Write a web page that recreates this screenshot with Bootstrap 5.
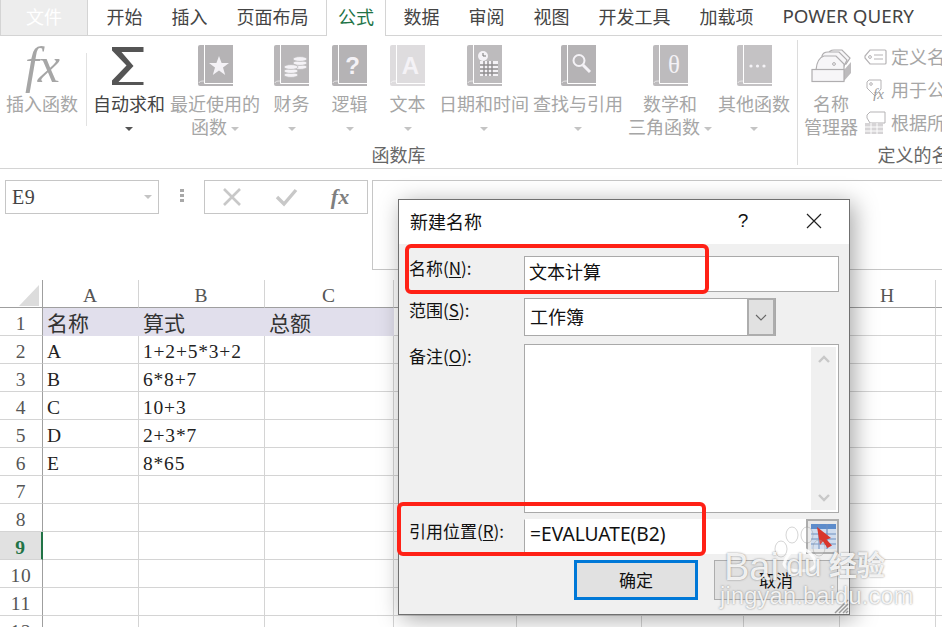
<!DOCTYPE html>
<html lang="zh-CN">
<head>
<meta charset="utf-8">
<title>新建名称</title>
<link href="https://cdn.jsdelivr.net/npm/bootstrap@5.3.0/dist/css/bootstrap.min.css" rel="stylesheet">
<style>
html,body{height:627px;overflow:hidden;background:#fff}
body{font-family:"Noto Sans CJK SC","Noto Sans",sans-serif;color:#444}
.page{position:relative;width:942px;height:627px;overflow:hidden}
/* tabs */
.tabbar{height:36px;border-bottom:1px solid #d4d4d4;font-size:18px;line-height:32px;white-space:nowrap}
.tab-file{width:88px;height:36px;background:#ededed;border:1px solid #d4d4d4;border-top:0;color:#fff;text-align:center;margin-right:4px}
.tab-item{padding:0 14.5px;color:#444}
.tab-on{margin:0 3px;padding:0 11px;height:36px;background:#fff;border:1px solid #d4d4d4;border-top:0;border-bottom:0;color:#217346}
.tab-pq{font-family:"Noto Sans",sans-serif;font-size:18.8px}
/* ribbon */
.ribbon{height:133px;border-bottom:1px solid #d4d4d4;overflow:hidden;width:942px}
.rgroup{position:relative;flex:none}
.rg-main{width:797px}
.rg-name{width:250px;border-left:1px solid #dcdcdc;margin-top:4px;height:125px}
.rg-label{position:absolute;left:0;right:0;top:106px;text-align:center;font-size:18px;line-height:24px;color:#666}
.rg-name .rg-label{top:102px}
.rbtn{flex:none;text-align:center;font-size:18px;line-height:23px;color:#a6a6a6;white-space:nowrap;padding-top:9px}
.rbtn svg{display:block;margin:0 auto}
.rbtn .rico{height:41px;margin-bottom:6px}
.rbtn .mgr-ico{height:37px;margin-bottom:6px}
.rbtn.dark{color:#444}
.w84{width:84px}.w74{width:74px}.w94{width:94px}.w59{width:59px}.w57{width:57px}.w90{width:90px}.w78{width:78px}
.nudge{margin-left:2px}
.rsep{flex:none;width:1px;height:73px;background:#e2e2e2;margin:17px 1px 0 2px}
.gap-after{margin-right:5px}
.car{display:inline-block;width:0;height:0;border:4px solid transparent;border-top:4px solid #c4c4c4;border-bottom:0;vertical-align:middle}
.dark .car{border-top-color:#555}
.fxbig{font-family:"Liberation Serif",serif;font-style:italic;font-size:50px;line-height:41px;color:#a6a6a6;letter-spacing:-1px}
.rlist{font-size:18px;line-height:33px;color:#a6a6a6;white-space:nowrap;margin-top:0}
.rlist svg{flex:none;margin-right:4px}
.mgr{width:66px}
/* formula bar */
.fbar{height:111px;padding-top:11px}
.namebox{margin-left:5px;width:154px;height:34px;border:1px solid #c6c6c6;padding:0 6px 0 6px;font-family:"Liberation Serif",serif;font-size:20px;letter-spacing:.5px;line-height:32px}
.fdots{width:45px;padding-top:9px}
.fdots i{display:block;width:4px;height:3px;background:#a8a8a8;margin:0 auto 2px}
.fbtns{width:164px;height:34px;border:1px solid #c6c6c6}
.fbtns>*{width:54px;text-align:center}
.fxsm{font-family:"Liberation Serif",serif;font-style:italic;font-weight:700;font-size:22px;line-height:30px;color:#7f7f7f}
.finput{margin-left:4px;flex:1;height:90px;border:1px solid #c6c6c6;border-right:0}
/* sheet */
.sheet{table-layout:fixed;border-collapse:separate;border-spacing:0;width:956px;margin:0;font-family:"Liberation Serif",serif;font-size:19.5px;letter-spacing:.8px;color:#222}
.sheet th,.sheet td{height:28px;padding:4px 0 0 0;border-right:1px solid #d4d4d4;border-bottom:1px solid #d4d4d4;line-height:23px;overflow:hidden;white-space:nowrap}
.sheet td{padding-left:4px}
.sheet th{font-weight:400;color:#555;text-align:center}
.sheet tr>th:first-child{border-right:1px solid #9f9f9f}
.sheet thead th{border-bottom:1px solid #9f9f9f;position:relative}
.c0{width:43px}.c1{width:96px}.c2{width:126px}.c3{width:129px}.c4{width:123px}.c5{width:125px}.c6{width:102px}.c7{width:96px}.c8{width:96px}.c9{width:20px}
.sheet td.filled{background:#e1dfec;border-color:#e1dfec;font-family:"Noto Sans CJK SC",sans-serif;font-size:21px;letter-spacing:0;color:#333;padding-top:2px;line-height:25px}
.sheet tr.cur>th:first-child{background:#e1e1e1;color:#217346;font-weight:700;border-right:2px solid #217346}
.corner{display:block;width:0;height:0;border-style:solid;border-width:0 0 21px 20px;border-color:transparent transparent #dcdcdc transparent;margin:-1px 0 0 19px}
/* dialog */
.dlg{position:absolute;left:398px;top:199px;width:452px;height:416px;background:#f0f0f0;border:1px solid #707070;box-shadow:4px 4px 22px rgba(0,0,0,.35);color:#111}
.dlg-title{height:44px;background:#fff;font-size:18px;line-height:44px;padding:0 0 2px 11px}
.dlg-q{width:20px;text-align:center;font-family:"Liberation Sans",sans-serif;margin-left:auto;margin-right:53px;font-size:19px}
.dlg-x{margin-right:27px}
.dlg-body{padding:12px 10px 0 10px}
.dlg-row{margin-bottom:6px}
.dlg-lab{width:115px;flex:none;font-size:17px;line-height:24px}
.dlg-lab u{text-underline-offset:2px}
.fld{background:#fff;border:1px solid #a9a9a9;border-radius:0;padding:0 4px;font-size:18px;line-height:28px;color:#111;flex:none}
.h36{height:36px}.w315{width:315px}
.sel{width:252px;height:38px;padding:0 0 0 5px;line-height:34px}
.selb{width:28px;height:38px;margin-left:auto;margin-top:-1px;background:#e1e1e1;border:2px solid #adadad}
.ta{width:315px;height:169px;padding:0;position:relative}
.tascroll{position:absolute;right:2px;top:2px;bottom:2px;width:25px;background:#f0f0f0}
.ref{width:282px;height:35px;border-right:0;padding-left:5px;font-family:"Noto Sans",sans-serif;font-size:19.2px;line-height:28px;border-color:#fff;border-left-color:#a9a9a9}
.refb{width:33px;height:35px;flex:none;background:#e9e9e9;border:2px solid #adadad;padding:3px}
.dlg-acts{padding-left:165px;margin-top:1px}
.dbtn{width:124px;height:40px;border-radius:0;padding:0;font-size:17px;line-height:34px;color:#111;background:#e1e1e1;--bs-btn-hover-bg:#e1e1e1}
.dbtn-ok{border:3px solid #0078d7}
.dbtn-no{border:1px solid #adadad;margin-left:16px;line-height:38px}
.grip{position:absolute;right:0;bottom:0}
/* annotation */
.redbox{position:absolute;border:4px solid #ff2116;border-radius:6px;pointer-events:none}
.rb-a{left:405px;top:244px;width:304px;height:50px}
.rb-b{left:397px;top:502px;width:309px;height:54px}
/* watermark */
.wm{position:absolute;color:rgba(255,255,255,.88);text-shadow:0 0 2px rgba(90,90,90,.75);white-space:nowrap;font-family:"Liberation Sans",sans-serif;line-height:1}
.wm-bai{left:724px;top:548px;font-size:38px}
.wm-du{left:786px;top:549px;font-size:32px}
.wm-cn{left:829px;top:550px;font-size:28px;font-family:"Noto Sans CJK SC",sans-serif;font-weight:700}
.wm-url{left:720px;top:585px;font-size:23.5px;letter-spacing:.25px}
.wm-paw{position:absolute;left:772px;top:526px}
</style>
</head>
<body>
<div class="page">

<svg width="0" height="0" class="d-block" style="position:absolute">
  <defs>
    <g id="bk">
      <path d="M2 0H35V41H2Q0 41 0 39V2Q0 0 2 0Z" fill="currentColor"/>
      <path d="M6.5 0V38.5H35" fill="none" stroke="#fff" stroke-width="1"/>
      <path d="M1 38C1 36.5 3 36 6 36" fill="none" stroke="#fff" stroke-width=".6"/>
    </g>
  </defs>
</svg>

<div class="tabbar d-flex">
  <div class="tab-file">文件</div>
  <div class="tab-item">开始</div>
  <div class="tab-item">插入</div>
  <div class="tab-item">页面布局</div>
  <div class="tab-on">公式</div>
  <div class="tab-item">数据</div>
  <div class="tab-item">审阅</div>
  <div class="tab-item">视图</div>
  <div class="tab-item">开发工具</div>
  <div class="tab-item">加载项</div>
  <div class="tab-item tab-pq">POWER QUERY</div>
</div>

<div class="ribbon d-flex">
  <div class="rgroup rg-main d-flex">
    <div class="rbtn w84"><div class="rico fxbig">fx</div>插入函数</div>
    <div class="rsep gap-after"></div>
    <div class="rbtn w74 dark">
      <svg class="rico" width="34" height="41" viewBox="1.5 0 34 41"><path d="M1 2H33V7H11L23 21L8 37H33V40H1V36L16 20.5L1 5Z" fill="#555"/></svg>
      自动求和<br><span class="car"></span>
    </div>
    <div class="rbtn w94 nudge">
      <svg class="rico" width="35" height="41" viewBox="0 0 35 41" color="#b5b3b5"><use href="#bk"/><polygon points="21,11 23.6,18 31,18 25,22.6 27.2,30 21,25.6 14.8,30 17,22.6 11,18 18.4,18" fill="#f4f2f6"/></svg>
      最近使用的<br>函数 <span class="car"></span>
    </div>
    <div class="rbtn w59">
      <svg class="rico" width="35" height="41" viewBox="0 0 35 41" color="#b9b7b9"><use href="#bk"/><g fill="#f4f2f6" stroke="#b9b7b9" stroke-width=".8"><ellipse cx="26" cy="22" rx="7" ry="2.4"/><ellipse cx="26" cy="18" rx="7" ry="2.4"/><ellipse cx="26" cy="14" rx="7" ry="2.4"/><ellipse cx="17" cy="30" rx="7" ry="2.4"/><ellipse cx="17" cy="26" rx="7" ry="2.4"/><ellipse cx="17" cy="22" rx="7" ry="2.4"/></g></svg>
      财务<br><span class="car"></span>
    </div>
    <div class="rbtn w57">
      <svg class="rico" width="35" height="41" viewBox="0 0 35 41" color="#b5b3b5"><use href="#bk"/><text x="20.5" y="29" text-anchor="middle" font-family="Liberation Sans" font-weight="700" font-size="24" fill="#f4f2f6">?</text></svg>
      逻辑<br><span class="car"></span>
    </div>
    <div class="rbtn w59">
      <svg class="rico" width="35" height="41" viewBox="0 0 35 41" color="#dedcde"><use href="#bk"/><text x="20.5" y="29" text-anchor="middle" font-family="Liberation Sans" font-weight="700" font-size="24" fill="#f4f2f6">A</text></svg>
      文本<br><span class="car"></span>
    </div>
    <div class="rbtn w94">
      <svg class="rico" width="35" height="41" viewBox="0 0 35 41" color="#bdbbbd"><use href="#bk"/><circle cx="16" cy="11" r="5" fill="#f4f2f6"/><path d="M16 8V11H19" stroke="#777" fill="none"/><rect x="13" y="16" width="18" height="15" fill="#f4f2f6"/><path d="M13 20H31M13 24H31M13 28H31M17 16V31M21 16V31M25 16V31" stroke="#8f8d8f" stroke-width="1.4"/></svg>
      日期和时间<br><span class="car"></span>
    </div>
    <div class="rbtn w94">
      <svg class="rico" width="35" height="41" viewBox="0 0 35 41" color="#b5b3b5"><use href="#bk"/><circle cx="18" cy="15.5" r="5.5" fill="none" stroke="#f4f2f6" stroke-width="2"/><path d="M22 20L29 27" stroke="#f4f2f6" stroke-width="3"/></svg>
      查找与引用<br><span class="car"></span>
    </div>
    <div class="rbtn w90">
      <svg class="rico" width="35" height="41" viewBox="0 0 35 41" color="#bdbbbd"><use href="#bk"/><text x="21" y="28" text-anchor="middle" font-family="Liberation Serif" font-size="25" fill="#f4f2f6">θ</text></svg>
      数学和<br>三角函数 <span class="car"></span>
    </div>
    <div class="rbtn w78">
      <svg class="rico" width="35" height="41" viewBox="0 0 35 41" color="#c4c2c4"><use href="#bk"/><circle cx="14" cy="21" r="1.6" fill="#f4f2f6"/><circle cx="20.5" cy="21" r="1.6" fill="#f4f2f6"/><circle cx="27" cy="21" r="1.6" fill="#f4f2f6"/></svg>
      其他函数<br><span class="car"></span>
    </div>
    <div class="rg-label">函数库</div>
  </div>
  <div class="rgroup rg-name d-flex">
    <div class="rbtn mgr">
      <svg class="mgr-ico" width="42" height="37" viewBox="0 3 42 37"><g fill="#f7f6f8" stroke="#b0aeb0" stroke-width="1.2"><path d="M18 14V9Q19 4 24 4H32L40 12L36 18Z"/><path d="M12 16V10Q13 6 18 6H29L37 14L34 20Z"/><path d="M6 24Q7 12 14 10H26L34 18V24Z"/></g><circle cx="24" cy="18" r="1.4" fill="none" stroke="#b0aeb0"/><path d="M34 24L41 16V27L34 35Z" fill="#bdbbbd"/><rect x="2" y="23.5" width="32" height="12" fill="#f7f6f8" stroke="#b0aeb0" stroke-width="1.2"/></svg>
      <div class="d-block">名称<br>管理器</div>
    </div>
    <div class="rlist">
      <div class="d-flex align-items-center"><svg width="23" height="16" viewBox="0 0 23 16"><path d="M6 1H21Q22 1 22 2V14Q22 15 21 15H6L1 9V7Z" fill="#fff" stroke="#b5b3b5" stroke-width="1.2"/><circle cx="6" cy="8" r="1.4" fill="none" stroke="#b5b3b5"/><path d="M10 6H19M10 10H19" stroke="#b5b3b5" stroke-width="1.2"/></svg>定义名称</div>
      <div class="d-flex align-items-center"><svg width="23" height="22" viewBox="0 0 23 22"><path d="M5 1H17V10L11 17L3 9V3Z" fill="#fff" stroke="#b5b3b5"/><circle cx="7" cy="5" r="1.3" fill="none" stroke="#b5b3b5"/><text x="9" y="20" font-family="Liberation Serif" font-style="italic" font-size="15" fill="#9a9a9a">fx</text></svg>用于公式</div>
      <div class="d-flex align-items-center"><svg width="23" height="23" viewBox="0 0 23 23"><path d="M6 1H21V12H6L3 7V4Z" fill="#fff" stroke="#b5b3b5"/><path d="M1 12H19V23H1Z" fill="#d6d4d6"/><path d="M1 16H19M1 20H19M7 12V23M13 12V23" stroke="#fff"/></svg>根据所选内容创建</div>
    </div>
    <div class="rg-label">定义的名称</div>
  </div>
</div>

<div class="fbar d-flex align-items-start">
  <div class="namebox d-flex justify-content-between align-items-center"><span>E9</span><span class="car"></span></div>
  <div class="fdots"><i></i><i></i><i></i></div>
  <div class="fbtns d-flex align-items-center">
    <svg width="54" height="20" viewBox="0 0 54 20"><path d="M19 2L35 18M35 2L19 18" stroke="#c8c8c8" stroke-width="2.6"/></svg>
    <svg width="54" height="20" viewBox="0 0 54 20"><path d="M18 10L25 17L37 3" fill="none" stroke="#c8c8c8" stroke-width="3.4"/></svg>
    <span class="fxsm">fx</span>
  </div>
  <div class="finput"></div>
</div>

<table class="sheet">
  <colgroup><col class="c0"><col class="c1"><col class="c2"><col class="c3"><col class="c4"><col class="c5"><col class="c6"><col class="c7"><col class="c8"><col class="c9"></colgroup>
  <thead><tr><th><span class="corner"></span></th><th>A</th><th>B</th><th>C</th><th>D</th><th>E</th><th>F</th><th>G</th><th>H</th><th></th></tr></thead>
  <tbody>
  <tr><th>1</th><td class="filled">名称</td><td class="filled">算式</td><td class="filled">总额</td><td></td><td></td><td></td><td></td><td></td><td></td></tr>
  <tr><th>2</th><td>A</td><td>1+2+5*3+2</td><td></td><td></td><td></td><td></td><td></td><td></td><td></td></tr>
  <tr><th>3</th><td>B</td><td>6*8+7</td><td></td><td></td><td></td><td></td><td></td><td></td><td></td></tr>
  <tr><th>4</th><td>C</td><td>10+3</td><td></td><td></td><td></td><td></td><td></td><td></td><td></td></tr>
  <tr><th>5</th><td>D</td><td>2+3*7</td><td></td><td></td><td></td><td></td><td></td><td></td><td></td></tr>
  <tr><th>6</th><td>E</td><td>8*65</td><td></td><td></td><td></td><td></td><td></td><td></td><td></td></tr>
  <tr><th>7</th><td></td><td></td><td></td><td></td><td></td><td></td><td></td><td></td><td></td></tr>
  <tr><th>8</th><td></td><td></td><td></td><td></td><td></td><td></td><td></td><td></td><td></td></tr>
  <tr class="cur"><th>9</th><td></td><td></td><td></td><td></td><td></td><td></td><td></td><td></td><td></td></tr>
  <tr><th>10</th><td></td><td></td><td></td><td></td><td></td><td></td><td></td><td></td><td></td></tr>
  <tr><th>11</th><td></td><td></td><td></td><td></td><td></td><td></td><td></td><td></td><td></td></tr>
  <tr><th>12</th><td></td><td></td><td></td><td></td><td></td><td></td><td></td><td></td><td></td></tr>
  </tbody>
</table>

<div class="dlg">
  <div class="dlg-title d-flex align-items-center">
    <span>新建名称</span>
    <span class="dlg-q">?</span>
    <svg class="dlg-x" width="16" height="16" viewBox="0 0 16 16"><path d="M1 1L15 15M15 1L1 15" stroke="#222" stroke-width="1.2"/></svg>
  </div>
  <div class="dlg-body">
    <div class="dlg-row d-flex">
      <div class="dlg-lab">名称(<u>N</u>):</div>
      <div class="fld h36 w315">文本计算</div>
    </div>
    <div class="dlg-row d-flex">
      <div class="dlg-lab">范围(<u>S</u>):</div>
      <div class="fld sel d-flex">工作簿
        <div class="selb d-flex align-items-center justify-content-center"><svg width="12" height="7" viewBox="0 0 12 7"><path d="M1 1L6 6L11 1" fill="none" stroke="#666" stroke-width="1.1"/></svg></div>
      </div>
    </div>
    <div class="dlg-row d-flex mt-2">
      <div class="dlg-lab">备注(<u>O</u>):</div>
      <div class="fld ta">
        <div class="tascroll d-flex flex-column justify-content-between align-items-center py-2">
          <svg width="12" height="8" viewBox="0 0 12 8"><path d="M1 7L6 2L11 7" fill="none" stroke="#c8c8c8" stroke-width="2.4"/></svg>
          <svg width="12" height="8" viewBox="0 0 12 8"><path d="M1 1L6 6L11 1" fill="none" stroke="#c8c8c8" stroke-width="2.4"/></svg>
        </div>
      </div>
    </div>
    <div class="dlg-row d-flex">
      <div class="dlg-lab">引用位置(<u>R</u>):</div>
      <div class="fld ref">=EVALUATE(B2)</div>
      <div class="refb">
        <svg class="d-block" width="25" height="25" viewBox="0 0 25 25"><rect width="25" height="25" fill="#cfdcee"/><rect width="25" height="5" fill="#5d8ccb"/><path d="M0 10H25M0 15H25M0 20H25M8 0V25M16 0V25" stroke="#6f8fc0" stroke-width="1.2"/><path d="M6 3L20 14L15.5 15.5L21 21.5L16.5 24L12 17.5L9 21Z" fill="#d9362b"/></svg>
      </div>
    </div>
    <div class="dlg-acts d-flex">
      <button type="button" class="btn dbtn dbtn-ok">确定</button>
      <button type="button" class="btn dbtn dbtn-no">取消</button>
    </div>
  </div>
  <svg class="grip" width="15" height="15" viewBox="0 0 15 15"><path d="M14 1L1 14M14 5L5 14M14 9L9 14M14 12L12 14" stroke="#9a9a9a" stroke-width="1.5"/></svg>
</div>

<div class="redbox rb-a"></div>
<div class="redbox rb-b"></div>

<svg class="wm-paw" width="56" height="46" viewBox="0 0 56 46"><g fill="rgba(255,255,255,.12)" stroke="rgba(150,150,150,.4)" stroke-width="1"><ellipse cx="9" cy="23" rx="6" ry="8"/><ellipse cx="20" cy="9" rx="6" ry="8"/><ellipse cx="35" cy="9" rx="6" ry="8"/><ellipse cx="47" cy="22" rx="6" ry="8"/><path d="M12 38Q16 24 28 22Q40 24 44 38Q42 45 28 45Q14 45 12 38Z" fill="none" stroke="rgba(255,255,255,.85)" stroke-width="3"/></g></svg>
<div class="wm wm-bai">Bai</div>
<div class="wm wm-du">du</div>
<div class="wm wm-cn">经验</div>
<div class="wm wm-url">jingyan.baidu.com</div>

</div>
<script src="https://cdn.jsdelivr.net/npm/bootstrap@5.3.0/dist/js/bootstrap.bundle.min.js"></script>
</body>
</html>
